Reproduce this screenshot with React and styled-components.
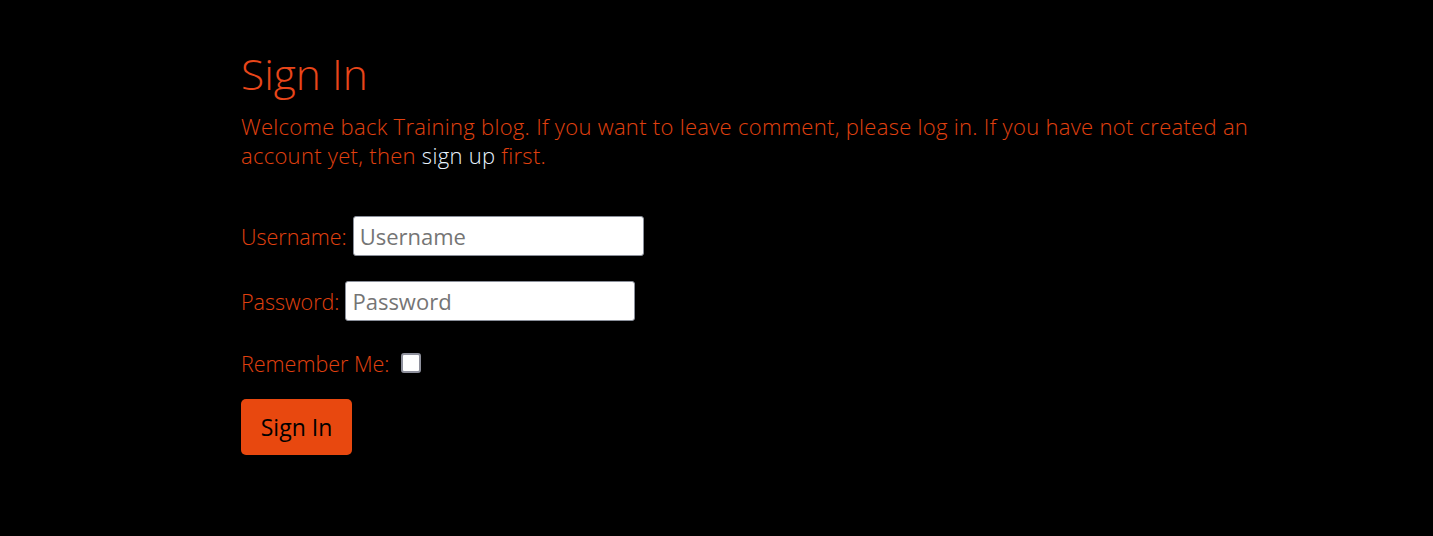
import React from "react";
import styled, { createGlobalStyle } from "styled-components";

const GlobalStyle = createGlobalStyle`
  html, body {
    margin: 0;
    padding: 0;
    background: #000;
  }
  body {
    font-family: "Open Sans", "Noto Sans", sans-serif;
    font-weight: 300;
    color: #e0400f;
  }
`;

const Page = styled.div`
  min-height: 536px;
  background: #000;
  padding: 50px 0 0 241px;
  box-sizing: border-box;
`;

const Wrap = styled.div`
  max-width: 1060px;
`;

const Title = styled.h1`
  margin: 0 0 14px;
  font-size: 42.5px;
  font-weight: 300;
  line-height: 48px;
  color: #e8461a;
`;

const Lead = styled.p`
  margin: 0 0 46px;
  font-size: 22px;
  letter-spacing: 0.29px;
  line-height: 29px;
  color: #e0400f;
`;

const SignUpLink = styled.a`
  color: #e8f4ff;
  text-decoration: none;
`;

const Form = styled.form`
  display: flex;
  flex-direction: column;
  align-items: flex-start;
`;

const Row = styled.div`
  display: flex;
  align-items: center;
  gap: 6px;
  height: ${(p) => p.$h || 40}px;
  margin-bottom: ${(p) => p.$gap}px;
`;

const Label = styled.label`
  font-size: 21.5px;
  color: #e0400f;
`;

const Input = styled.input`
  box-sizing: border-box;
  width: ${(p) => p.$w}px;
  height: 40px;
  padding: 0 6px;
  border: 1px solid #8a8f9a;
  border-radius: 3px;
  background: #fff;
  font-family: inherit;
  font-weight: 400;
  font-size: 22px;
  color: #333;
  outline: none;
  &::placeholder {
    color: #757575;
  }
`;

const Check = styled.input`
  appearance: none;
  width: 20px;
  height: 20px;
  margin: 0 0 0 6px;
  border: 2px solid #8e909c;
  border-radius: 3px;
  background: #fff;
  box-sizing: border-box;
`;

const Button = styled.button`
  width: 111px;
  height: 56px;
  border: none;
  border-radius: 5px;
  background: #e8480f;
  color: #000;
  font-family: inherit;
  font-weight: 400;
  font-size: 23px;
  cursor: pointer;
`;

export default function App() {
  return (
    <>
      <GlobalStyle />
      <Page>
        <Wrap>
          <Title>Sign In</Title>
          <Lead>
            Welcome back Training blog. If you want to leave comment, please log in. If you have
            not created an account yet, then <SignUpLink href="#">sign up</SignUpLink> first.
          </Lead>
          <Form onSubmit={(e) => e.preventDefault()}>
            <Row $gap={25}>
              <Label htmlFor="username">Username:</Label>
              <Input id="username" $w={291} placeholder="Username" />
            </Row>
            <Row $gap={22}>
              <Label htmlFor="password">Password:</Label>
              <Input id="password" type="password" $w={290} placeholder="Password" />
            </Row>
            <Row $h={40} $gap={16}>
              <Label htmlFor="remember">Remember Me:</Label>
              <Check id="remember" type="checkbox" />
            </Row>
            <Button type="submit">Sign In</Button>
          </Form>
        </Wrap>
      </Page>
    </>
  );
}
